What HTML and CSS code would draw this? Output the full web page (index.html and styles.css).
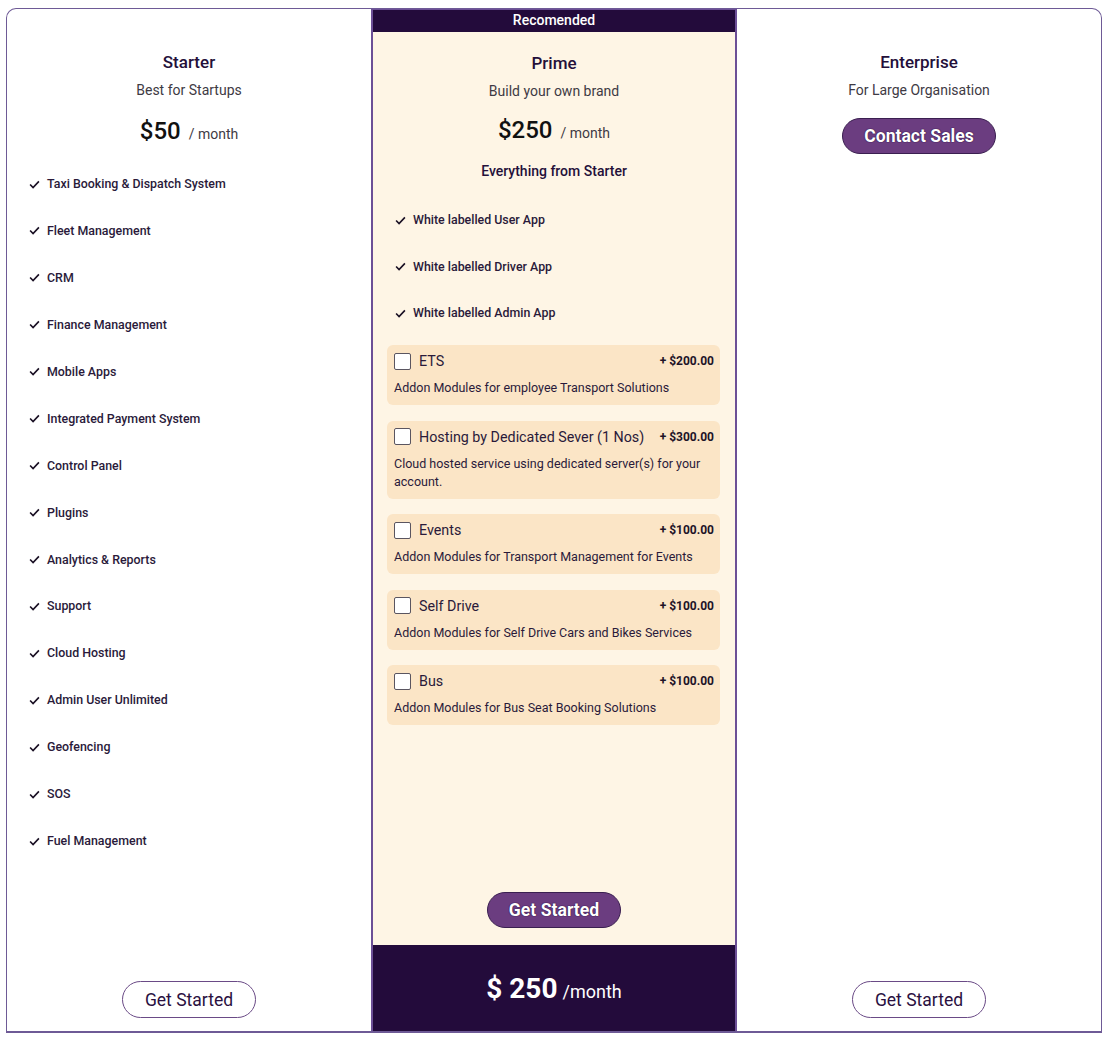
FILE: index.html
```html
<!DOCTYPE html>
<html lang="en">
<head>
<meta charset="utf-8">
<title>Pricing</title>
<link rel="stylesheet" href="styles.css">
</head>
<body>
<div class="pricing">
  <section class="plan plan-side">
    <h2 class="plan-title">Starter</h2>
    <p class="plan-sub">Best for Startups</p>
    <p class="plan-price"><span class="amount">$50</span><span class="per">/ month</span></p>
    <ul class="features">
      <li><svg class="check" viewBox="0 0 10 8"><polyline points="1,4 3.7,6.7 9,1.2"/></svg>Taxi Booking &amp; Dispatch System</li>
      <li><svg class="check" viewBox="0 0 10 8"><polyline points="1,4 3.7,6.7 9,1.2"/></svg>Fleet Management</li>
      <li><svg class="check" viewBox="0 0 10 8"><polyline points="1,4 3.7,6.7 9,1.2"/></svg>CRM</li>
      <li><svg class="check" viewBox="0 0 10 8"><polyline points="1,4 3.7,6.7 9,1.2"/></svg>Finance Management</li>
      <li><svg class="check" viewBox="0 0 10 8"><polyline points="1,4 3.7,6.7 9,1.2"/></svg>Mobile Apps</li>
      <li><svg class="check" viewBox="0 0 10 8"><polyline points="1,4 3.7,6.7 9,1.2"/></svg>Integrated Payment System</li>
      <li><svg class="check" viewBox="0 0 10 8"><polyline points="1,4 3.7,6.7 9,1.2"/></svg>Control Panel</li>
      <li><svg class="check" viewBox="0 0 10 8"><polyline points="1,4 3.7,6.7 9,1.2"/></svg>Plugins</li>
      <li><svg class="check" viewBox="0 0 10 8"><polyline points="1,4 3.7,6.7 9,1.2"/></svg>Analytics &amp; Reports</li>
      <li><svg class="check" viewBox="0 0 10 8"><polyline points="1,4 3.7,6.7 9,1.2"/></svg>Support</li>
      <li><svg class="check" viewBox="0 0 10 8"><polyline points="1,4 3.7,6.7 9,1.2"/></svg>Cloud Hosting</li>
      <li><svg class="check" viewBox="0 0 10 8"><polyline points="1,4 3.7,6.7 9,1.2"/></svg>Admin User Unlimited</li>
      <li><svg class="check" viewBox="0 0 10 8"><polyline points="1,4 3.7,6.7 9,1.2"/></svg>Geofencing</li>
      <li><svg class="check" viewBox="0 0 10 8"><polyline points="1,4 3.7,6.7 9,1.2"/></svg>SOS</li>
      <li><svg class="check" viewBox="0 0 10 8"><polyline points="1,4 3.7,6.7 9,1.2"/></svg>Fuel Management</li>
    </ul>
    <button class="btn btn-outline">Get Started</button>
  </section>

  <section class="plan plan-prime">
    <div class="ribbon">Recomended</div>
    <h2 class="plan-title prime-title">Prime</h2>
    <p class="plan-sub">Build your own brand</p>
    <p class="plan-price prime-price"><span class="amount">$250</span><span class="per">/ month</span></p>
    <p class="everything">Everything from Starter</p>
    <ul class="features features-prime">
      <li><svg class="check" viewBox="0 0 10 8"><polyline points="1,4 3.7,6.7 9,1.2"/></svg>White labelled User App</li>
      <li><svg class="check" viewBox="0 0 10 8"><polyline points="1,4 3.7,6.7 9,1.2"/></svg>White labelled Driver App</li>
      <li><svg class="check" viewBox="0 0 10 8"><polyline points="1,4 3.7,6.7 9,1.2"/></svg>White labelled Admin App</li>
    </ul>
    <div class="addons">
      <label class="addon">
        <span class="addon-row"><span class="box"></span><span class="addon-name">ETS</span><span class="addon-price">+ $200.00</span></span>
        <span class="addon-desc">Addon Modules for employee Transport Solutions</span>
      </label>
      <label class="addon">
        <span class="addon-row"><span class="box"></span><span class="addon-name">Hosting by Dedicated Sever (1 Nos)</span><span class="addon-price">+ $300.00</span></span>
        <span class="addon-desc">Cloud hosted service using dedicated server(s) for your account.</span>
      </label>
      <label class="addon">
        <span class="addon-row"><span class="box"></span><span class="addon-name">Events</span><span class="addon-price">+ $100.00</span></span>
        <span class="addon-desc">Addon Modules for Transport Management for Events</span>
      </label>
      <label class="addon">
        <span class="addon-row"><span class="box"></span><span class="addon-name">Self Drive</span><span class="addon-price">+ $100.00</span></span>
        <span class="addon-desc">Addon Modules for Self Drive Cars and Bikes Services</span>
      </label>
      <label class="addon">
        <span class="addon-row"><span class="box"></span><span class="addon-name">Bus</span><span class="addon-price">+ $100.00</span></span>
        <span class="addon-desc">Addon Modules for Bus Seat Booking Solutions</span>
      </label>
    </div>
    <button class="btn btn-filled btn-prime">Get Started</button>
    <div class="total"><span class="total-amount">$ 250</span><span class="total-per">/month</span></div>
  </section>

  <section class="plan plan-side">
    <h2 class="plan-title">Enterprise</h2>
    <p class="plan-sub">For Large Organisation</p>
    <button class="btn btn-filled btn-contact">Contact Sales</button>
    <button class="btn btn-outline">Get Started</button>
  </section>
</div>
</body>
</html>
```

FILE: styles.css
```css
* { box-sizing: border-box; }

body {
  margin: 0;
  padding: 8px 6px 0;
  background: #ffffff;
  font-family: Roboto, "Liberation Sans", Arial, sans-serif;
  color: #2a1a3a;
}

.pricing {
  display: grid;
  grid-template-columns: 364px 366px 364px;
  width: 1096px;
  height: 1025px;
  border: 1px solid #6e5a96;
  border-bottom-width: 2px;
  border-radius: 10px 10px 0 0;
}

.plan {
  display: flex;
  flex-direction: column;
  align-items: center;
  min-height: 0;
}

.plan-side {
  padding-top: 43px;
}

.plan-title {
  margin: 0;
  font-size: 17px;
  line-height: 20px;
  font-weight: 500;
  color: #24103a;
}

.plan-sub {
  margin: 8px 0 0;
  font-size: 14px;
  line-height: 20px;
  color: #3e3a44;
}

.plan-price {
  margin: 16px 0 0;
  display: flex;
  align-items: baseline;
  gap: 8px;
  line-height: 30px;
}

.amount {
  font-size: 24px;
  font-weight: 500;
  color: #111111;
}

.per {
  font-size: 14px;
  color: #3e3a44;
}

.features {
  list-style: none;
  margin: 25px 0 0;
  padding: 0 0 0 22px;
  align-self: stretch;
  display: flex;
  flex-direction: column;
  gap: 26.95px;
}

.features li {
  display: flex;
  align-items: center;
  gap: 7px;
  font-size: 12.4px;
  line-height: 20px;
  font-weight: 500;
  color: #2a1a3a;
}

.check {
  width: 11px;
  height: 9px;
  flex: none;
  fill: none;
  stroke: #1a1024;
  stroke-width: 1.5;
}

.btn {
  font-family: Roboto, "Liberation Sans", Arial, sans-serif;
  font-size: 17.5px;
  height: 37px;
  padding: 0 18px;
  border-radius: 19px;
  cursor: pointer;
}

.btn-outline {
  margin-top: auto;
  margin-bottom: 13px;
  background: #ffffff;
  border: 1px solid #6a4a86;
  color: #2a1040;
  width: 134px;
}

.btn-filled {
  background: #6b3d80;
  border: 1px solid #3a1f50;
  color: #ffffff;
  font-weight: 700;
  font-size: 17.6px;
  height: 36px;
  text-shadow: 0 0 1px #2a1040, 0 0 1px #2a1040;
}

.btn-contact {
  margin-top: 18px;
  width: 154px;
}

/* Prime column */
.plan-prime {
  background: #fef5e5;
  border-left: 2px solid #6c4f96;
  border-right: 2px solid #6c4f96;
  border-top: 1px solid #6c4f96;
}

.ribbon {
  align-self: stretch;
  background: #230b3b;
  color: #ffffff;
  text-align: center;
  font-size: 14px;
  font-weight: 500;
  line-height: 20px;
  height: 22px;
}

.prime-title {
  margin-top: 21px;
}

.prime-price {
  margin-top: 14px;
}

.everything {
  margin: 13px 0 0;
  font-size: 14px;
  line-height: 20px;
  font-weight: 500;
  color: #24103a;
}

.features-prime {
  margin-top: 29px;
  gap: 26.5px;
}

.addons {
  align-self: stretch;
  margin: 22px 15px 0 14px;
  display: flex;
  flex-direction: column;
  gap: 15.5px;
}

.addon {
  display: block;
  background: #fbe5c6;
  border-radius: 6px;
  padding: 7px 6px 8px 7px;
}

.addon-row {
  display: flex;
  align-items: center;
  height: 18px;
}

.box {
  width: 17px;
  height: 17px;
  flex: none;
  background: #ffffff;
  border: 1px solid #5a5560;
  border-radius: 2px;
}

.addon-name {
  margin-left: 8px;
  font-size: 14.3px;
  color: #2a1a3a;
}

.addon-price {
  margin-left: auto;
  font-size: 12px;
  font-weight: 700;
  color: #1e1428;
}

.addon-desc {
  display: block;
  margin-top: 9px;
  font-size: 12.5px;
  line-height: 18px;
  color: #2a1a3a;
}

.btn-prime {
  margin-top: auto;
  margin-bottom: 17px;
  width: 134px;
}

.total {
  align-self: stretch;
  height: 86px;
  background: #230b3b;
  color: #ffffff;
  display: flex;
  align-items: center;
  justify-content: center;
  gap: 5px;
}

.total-amount {
  font-size: 28px;
  font-weight: 700;
}

.total-per {
  font-size: 18px;
  margin-top: 6px;
}
```
